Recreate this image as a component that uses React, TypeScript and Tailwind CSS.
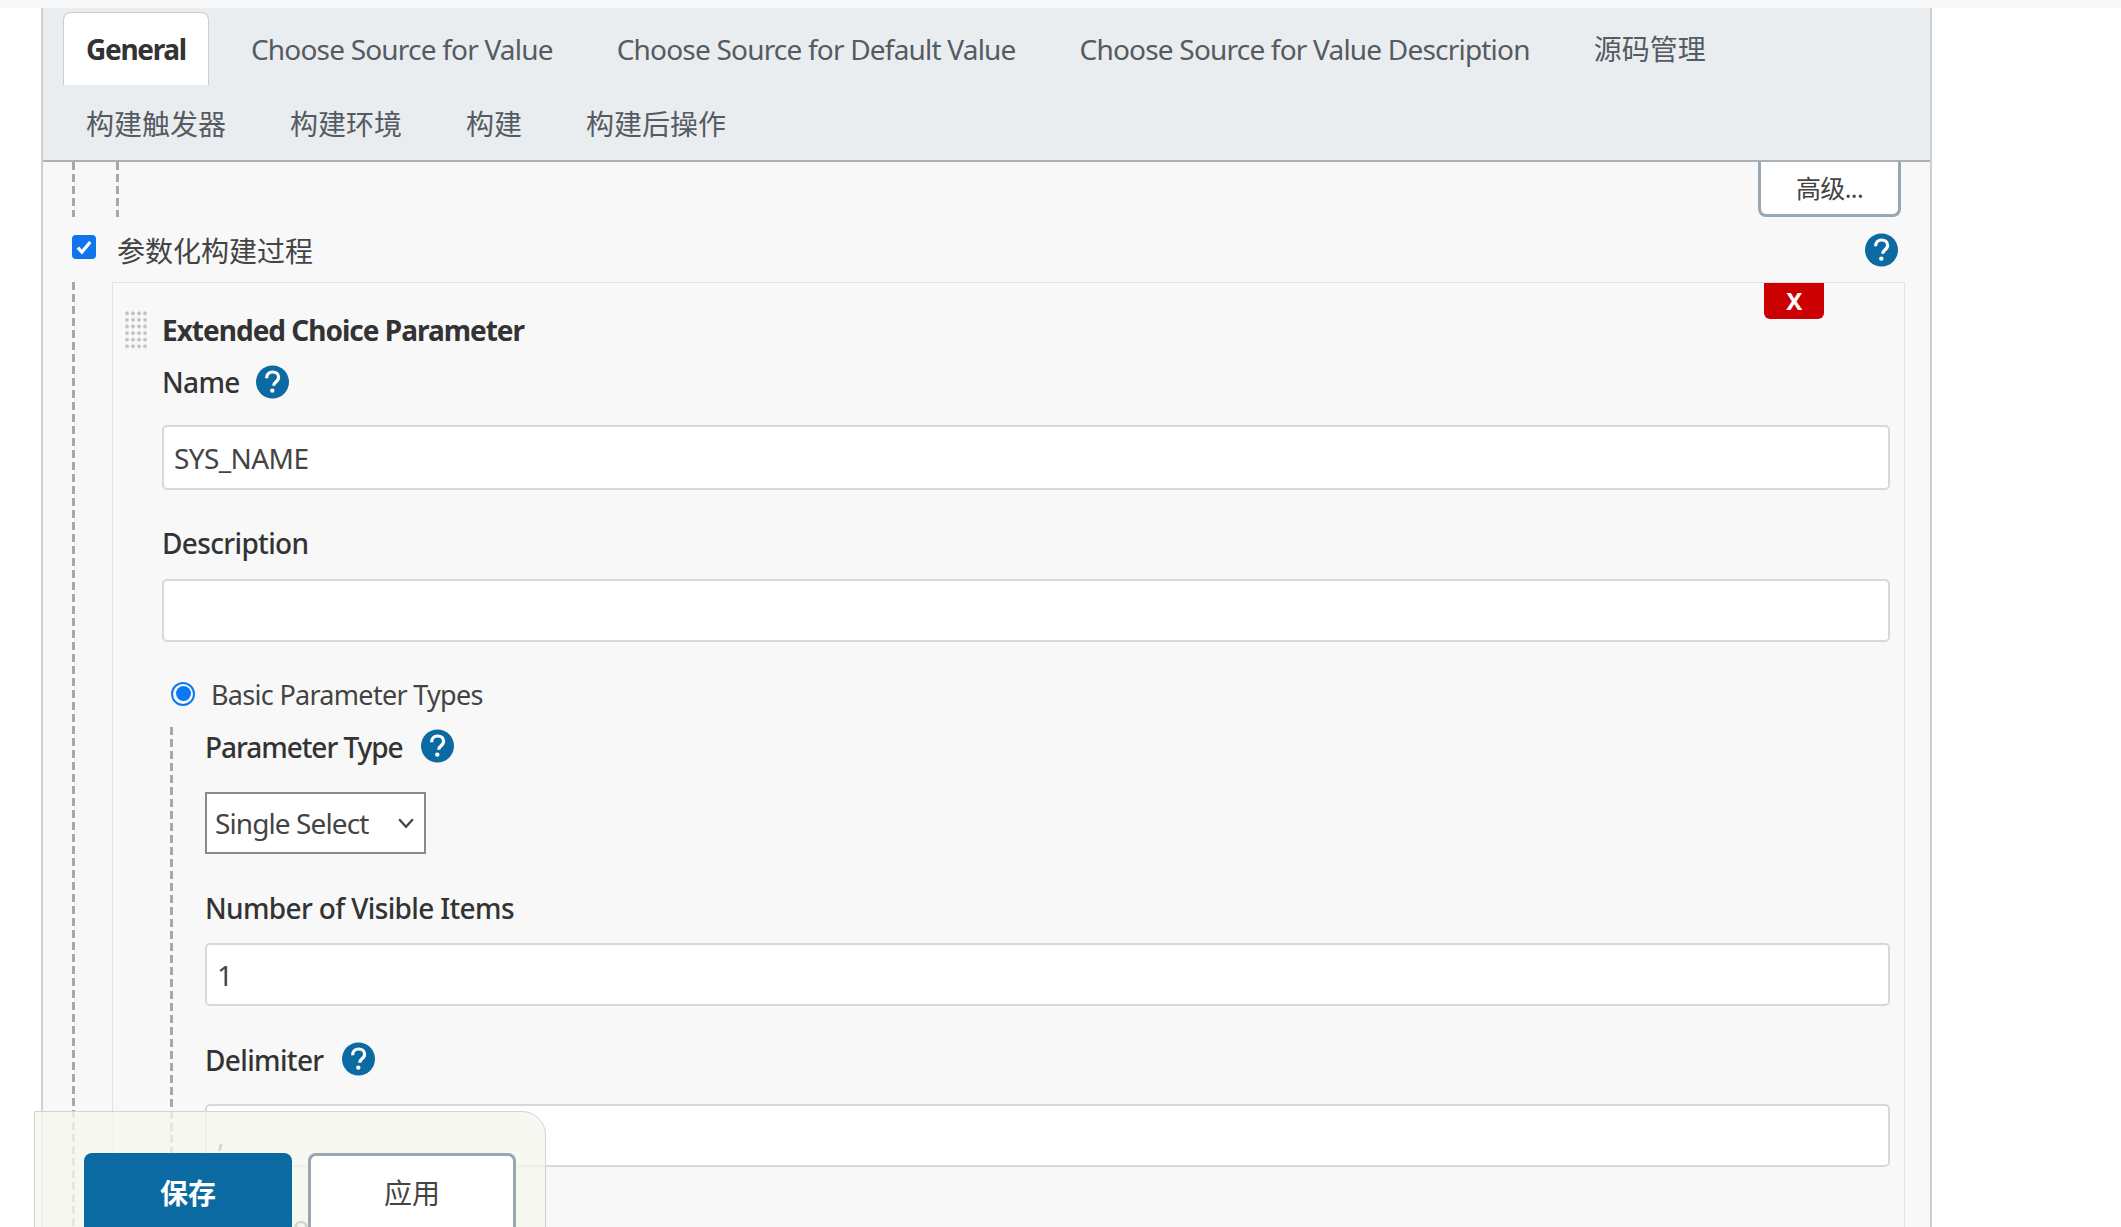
const font = '[font-family:"Noto_Sans","Noto_Sans_CJK_SC",sans-serif]';

function Help({ className = "" }: { className?: string }) {
  return (
    <svg viewBox="0 0 33 34" className={"w-[33px] h-[34px] shrink-0 " + className}>
      <circle cx="16.5" cy="17" r="16.5" fill="#0b6aa2" />
      <path d="M10.6 13.2c0-3.7 2.5-6.2 6.1-6.2 3.5 0 5.9 2.2 5.9 5.3 0 2.3-1.3 3.6-2.9 4.8-1.4 1-1.9 1.9-1.9 3.7" fill="none" stroke="#fff" strokeWidth="3.2" />
      <circle cx="16.3" cy="25.6" r="2.2" fill="#fff" />
    </svg>
  );
}

function Tab({ children, active = false, cjk = false }: { children: React.ReactNode; active?: boolean; cjk?: boolean }) {
  const spacing = cjk ? " tracking-normal" : active ? " tracking-[-1.3px]" : "";
  return active ? (
    <div className={"h-[73px] px-[22px] flex items-center bg-white border border-b-0 border-[#c8ced4] rounded-t-[8px] font-bold text-[#333]" + spacing}>
      {children}
    </div>
  ) : (
    <div className={"h-[73px] px-[22px] flex items-center text-[#555b62]" + spacing}>{children}</div>
  );
}

function TextField({ value, className = "" }: { value?: string; className?: string }) {
  return (
    <div className={"h-[63px] bg-white border-2 border-[#d6d8da] rounded-[5px] pl-[10px] pt-[1px] flex items-center text-[#444] tracking-[-0.6px] " + className}>
      {value}
    </div>
  );
}

function Dashed({ className = "" }: { className?: string }) {
  return <div className={"w-[3px] bg-[repeating-linear-gradient(to_bottom,#a8a8a8_0,#a8a8a8_8px,transparent_8px,transparent_12px)] " + className} />;
}

const label = "flex items-center h-[40px] text-[#333] font-medium tracking-[-0.65px]";

export default function App() {
  return (
    <div className={"relative w-[2121px] h-[1227px] overflow-hidden bg-white text-[28px] leading-[36px] tracking-[-0.8px] " + font}>
      <div className="h-[8px] bg-[#f8f8f8]" />
      <div className="ml-[41px] w-[1891px] h-[1219px] border-x-2 border-[#cfcfcf] bg-[#f8f8f8]">
        <div className="h-[154px] bg-[#e9edf0] border-b-2 border-[#a9b2ba] pl-[20px] pt-[4px]">
          <div className="flex flex-wrap gap-x-[20px]">
            <Tab active>General</Tab>
            <Tab>Choose Source for Value</Tab>
            <Tab>Choose Source for Default Value</Tab>
            <Tab>Choose Source for Value Description</Tab>
            <Tab cjk>源码管理</Tab>
          </div>
          <div className="flex gap-x-[20px] mt-[2px] pl-[1px]">
            <Tab cjk>构建触发器</Tab>
            <Tab cjk>构建环境</Tab>
            <Tab cjk>构建</Tab>
            <Tab cjk>构建后操作</Tab>
          </div>
        </div>

        <div className="flex h-[55px] pl-[29px] pr-[29px]">
          <Dashed />
          <Dashed className="ml-[41px]" />
          <div className="ml-auto w-[143px] h-[55px] bg-white border-[3px] border-t-0 border-[#9aa6b0] rounded-b-[8px] flex items-center justify-center text-[#444] text-[25px] tracking-[-0.6px]">
            高级...
          </div>
        </div>

        <div className="flex items-center h-[65px] pl-[29px] pr-[32px]">
          <div className="w-[24px] h-[24px] -mt-[5px] rounded-[4px] bg-[#0f75ec] flex items-center justify-center">
            <svg viewBox="0 0 16 16" className="w-[20px] h-[20px]">
              <path d="M3 8.5l3.3 3.5L13 4" fill="none" stroke="#fff" strokeWidth="2.6" />
            </svg>
          </div>
          <span className="ml-[21px] mt-[2px] text-[#444] tracking-normal">参数化构建过程</span>
          <Help className="ml-auto" />
        </div>

        <div className="flex ml-[29px]">
          <Dashed />
          <div className="relative ml-[37px] w-[1793px] h-[945px] border border-b-0 border-[#e2e2e2] pl-[49px] pr-[14px]">
            <div className="absolute right-[80px] top-0 w-[60px] h-[36px] bg-[#cc0000] rounded-b-[6px] flex items-center justify-center text-white font-bold text-[24px]">
              X
            </div>
            <div className="flex items-center h-[40px] mt-[27px] -ml-[38px]">
              <div className="w-[24px] h-[40px] bg-[radial-gradient(#c2c2c2_1.5px,transparent_2px)] bg-[length:6px_6.6px]" />
              <span className="ml-[14px] font-bold text-[#333] tracking-[-1px]">Extended Choice Parameter</span>
            </div>
            <div className={label + " mt-[12px]"}>
              Name
              <Help className="ml-[16px] -mt-[1px]" />
            </div>
            <TextField value="SYS_NAME" className="mt-[23px] h-[65px]" />
            <div className={label + " mt-[33px]"}>Description</div>
            <TextField className="mt-[16px]" />

            <div className="flex items-center h-[40px] mt-[33px] ml-[9px]">
              <div className="w-[24px] h-[24px] rounded-full border-[2px] border-[#0b78f5] flex items-center justify-center -mt-[3px]">
                <div className="w-[15px] h-[15px] rounded-full bg-[#0b78f5]" />
              </div>
              <span className="ml-[16px] text-[#444] text-[27px] tracking-[-0.7px]">Basic Parameter Types</span>
            </div>

            <div className="flex ml-[8px] mt-[12px]">
              <Dashed />
              <div className="ml-[32px] flex-1">
                <div className={label + " tracking-[-1.05px]"}>
                  Parameter Type
                  <Help className="ml-[18px] -mt-[2px]" />
                </div>
                <div className="mt-[25px] w-[221px] h-[62px] bg-white border-2 border-[#8a8a8a] pl-[8px] flex items-center text-[#444] tracking-[-0.9px]">
                  Single Select
                  <svg viewBox="0 0 16 16" className="ml-auto mr-[8px] w-[20px] h-[20px]">
                    <path d="M2.5 5l5.5 6 5.5-6" fill="none" stroke="#444" strokeWidth="1.8" />
                  </svg>
                </div>
                <div className={label + " mt-[34px]"}>Number of Visible Items</div>
                <TextField value="1" className="mt-[15px]" />
                <div className={label + " mt-[34px]"}>
                  Delimiter
                  <Help className="ml-[18px] -mt-[2px]" />
                </div>
                <TextField value="," className="mt-[24px]" />
                <div className="flex items-center h-[40px] mt-[38px] pl-[50px] text-[#444]">Quote Value</div>
              </div>
            </div>
          </div>
        </div>
      </div>

      <div className="absolute left-[34px] top-[1111px] w-[512px] h-[140px] bg-[#f4f6ee]/80 border border-[#c5dccb] rounded-tr-[24px] flex items-start gap-x-[16px] pl-[49px] pt-[41px]">
        <div className="w-[208px] h-[100px] bg-[#0b6aa2] rounded-[8px] flex items-center justify-center pb-[21px] text-white font-bold tracking-normal">
          保存
        </div>
        <div className="w-[208px] h-[100px] bg-white border-[3px] border-[#9aa6b0] rounded-[8px] flex items-center justify-center pb-[21px] text-[#444] tracking-normal">
          应用
        </div>
      </div>
    </div>
  );
}
